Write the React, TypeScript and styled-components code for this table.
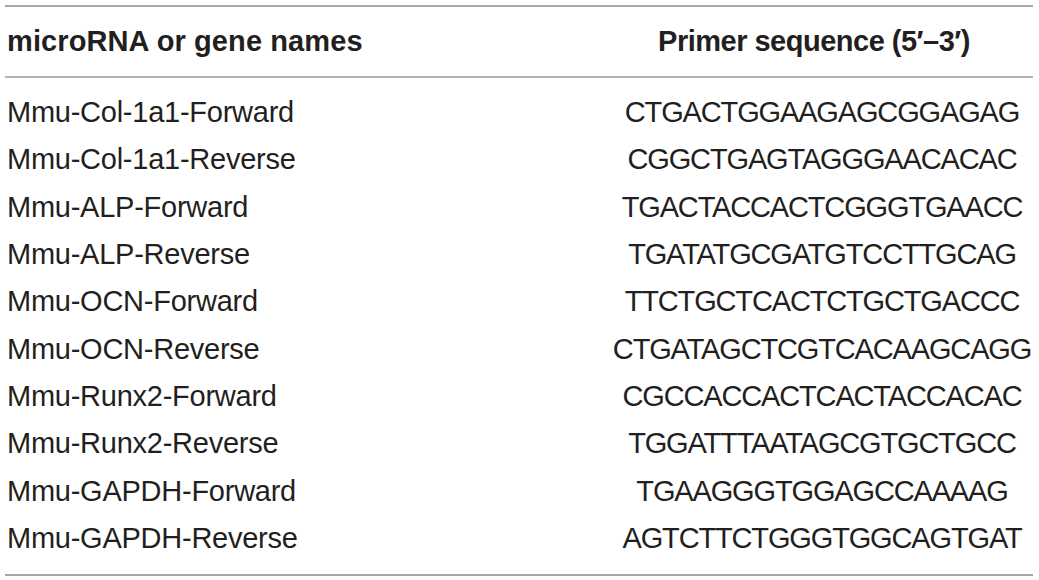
import React from "react";
import styled, { createGlobalStyle } from "styled-components";

const Global = createGlobalStyle`
  html, body { margin: 0; padding: 0; background: #ffffff; }
  body { font-family: "Liberation Sans", Arial, Helvetica, sans-serif; color: #231f20; }
`;

const Table = styled.div`
  margin: 5px 6px 0 5px;
  width: 1028px;
  border-top: 2px solid #a7a7a7;
  border-bottom: 2px solid #a7a7a7;
`;

const HeaderRow = styled.div`
  display: grid;
  grid-template-columns: 598px 1fr;
  align-items: center;
  height: 69px;
  border-bottom: 2px solid #b4b4b4;
`;

const Body = styled.div`
  padding: 11px 0 12px;
`;

const Row = styled.div`
  display: grid;
  grid-template-columns: 598px 1fr;
  align-items: center;
  height: 47.3px;
`;

const NameCell = styled.div<{ $bold?: boolean }>`
  font-size: 29px;
  line-height: 1;
  font-weight: ${(p) => (p.$bold ? 700 : 400)};
  letter-spacing: ${(p) => (p.$bold ? "0.1px" : "-0.25px")};
  padding-left: 2px;
  white-space: nowrap;
`;

const SeqCell = styled.div<{ $bold?: boolean }>`
  font-size: 29px;
  line-height: 1;
  font-weight: ${(p) => (p.$bold ? 700 : 400)};
  letter-spacing: ${(p) => (p.$bold ? "-0.5px" : "-1.15px")};
  text-align: center;
  padding: ${(p) => (p.$bold ? "0 8px 0 0" : "0 0 0 8px")};
  white-space: nowrap;
`;

const rows: [string, string][] = [
  ["Mmu-Col-1a1-Forward", "CTGACTGGAAGAGCGGAGAG"],
  ["Mmu-Col-1a1-Reverse", "CGGCTGAGTAGGGAACACAC"],
  ["Mmu-ALP-Forward", "TGACTACCACTCGGGTGAACC"],
  ["Mmu-ALP-Reverse", "TGATATGCGATGTCCTTGCAG"],
  ["Mmu-OCN-Forward", "TTCTGCTCACTCTGCTGACCC"],
  ["Mmu-OCN-Reverse", "CTGATAGCTCGTCACAAGCAGG"],
  ["Mmu-Runx2-Forward", "CGCCACCACTCACTACCACAC"],
  ["Mmu-Runx2-Reverse", "TGGATTTAATAGCGTGCTGCC"],
  ["Mmu-GAPDH-Forward", "TGAAGGGTGGAGCCAAAAG"],
  ["Mmu-GAPDH-Reverse", "AGTCTTCTGGGTGGCAGTGAT"],
];

export default function App() {
  return (
    <>
      <Global />
      <Table>
        <HeaderRow>
          <NameCell $bold>microRNA or gene names</NameCell>
          <SeqCell $bold>Primer sequence (5′–3′)</SeqCell>
        </HeaderRow>
        <Body>
          {rows.map(([name, seq]) => (
            <Row key={name}>
              <NameCell>{name}</NameCell>
              <SeqCell>{seq}</SeqCell>
            </Row>
          ))}
        </Body>
      </Table>
    </>
  );
}
